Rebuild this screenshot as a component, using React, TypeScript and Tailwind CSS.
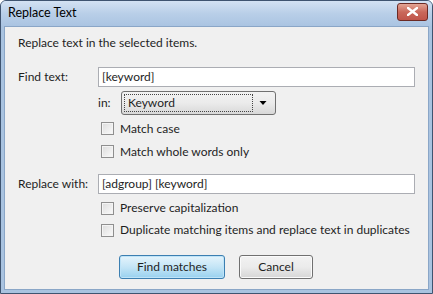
import React from "react";

function CheckRow({ label, h }: { label: string; h: string }) {
  return (
    <div className={`flex items-center whitespace-nowrap ${h}`}>
      <span className="w-[13px] h-[13px] shrink-0 border border-[#8f8f8f] bg-gradient-to-br from-[#dcdcdc] to-[#fbfbfb] shadow-[inset_0_0_0_1px_#f4f4f4]" />
      <span className="ml-[6px]">{label}</span>
    </div>
  );
}

export default function App() {
  return (
    <div
      className="w-[433px] h-[294px] bg-[#a9c3e0] border border-[#3f5470] rounded-t-[6px] flex flex-col text-[12px] text-[#1e1e1e] overflow-hidden"
      style={{ fontFamily: 'Lato, "Noto Sans", sans-serif' }}
    >
      {/* title bar */}
      <div className="h-[25px] shrink-0 flex items-center justify-between pl-[7px] pr-[4px] bg-gradient-to-b from-[#d3e2f3] via-[#b9cfe8] to-[#aac4e2]">
        <span className="text-[12.5px] text-black">Replace Text</span>
        <div className="w-[31px] h-[18px] mb-[4px] rounded-[3px] border border-[#6b2a24] bg-gradient-to-b from-[#e3a595] via-[#c9685b] to-[#c0554a] flex items-center justify-center">
          <svg width="11" height="9" viewBox="0 0 11 9">
            <path d="M1 1 L10 8 M10 1 L1 8" stroke="#fff" strokeWidth="2.4" strokeLinecap="square" />
          </svg>
        </div>
      </div>

      {/* body */}
      <div className="flex-1 mx-[3px] mb-[3px] border border-[#8aa6c7] bg-[#f0f0f0] pl-[13px] pr-[13px] pt-[7px]">
        <div className="h-[18px] flex items-center">Replace text in the selected items.</div>

        <div className="mt-[15px] flex items-center">
          <span className="w-[80px]">Find text:</span>
          <div className="flex-1 h-[20px] border border-[#abadb3] bg-white px-[3px] flex items-center">[keyword]</div>
        </div>

        <div className="mt-[4px] flex items-center pl-[80px]">
          <span className="w-[23px]">in:</span>
          <div className="w-[155px] h-[24px] rounded-[3px] border border-[#707070] bg-gradient-to-b from-[#f2f2f2] via-[#ebebeb] to-[#d8d8d8] flex items-center p-[2px]">
            <div className="flex-1 h-full border border-dotted border-[#444] flex items-center pl-[3px]">Keyword</div>
            <svg width="20" height="8" viewBox="0 0 20 8">
              <path d="M6.5 2 L13.5 2 L10 6 Z" fill="#000" />
            </svg>
          </div>
        </div>

        <div className="mt-[2px] pl-[83px]">
          <CheckRow label="Match case" h="h-[23px]" />
          <CheckRow label="Match whole words only" h="h-[23px]" />
        </div>

        <div className="mt-[11px] flex items-center">
          <span className="w-[80px]">Replace with:</span>
          <div className="flex-1 h-[20px] border border-[#abadb3] bg-white px-[3px] flex items-center">[adgroup] [keyword]</div>
        </div>

        <div className="mt-[3px] pl-[83px]">
          <CheckRow label="Preserve capitalization" h="h-[22px]" />
          <CheckRow label="Duplicate matching items and replace text in duplicates" h="h-[22px]" />
        </div>

        <div className="mt-[14px] flex pl-[101px] gap-[14px]">
          <div className="w-[106px] h-[24px] rounded-[3px] border border-[#3c7fb1] bg-gradient-to-b from-[#e5f4fc] via-[#c4e5f6] to-[#98d1ef] shadow-[inset_0_0_0_1px_#bfe4f8] flex items-center justify-center">
            Find matches
          </div>
          <div className="w-[74px] h-[24px] rounded-[3px] border border-[#707070] bg-gradient-to-b from-[#f2f2f2] via-[#ebebeb] to-[#d6d6d6] shadow-[inset_0_0_0_1px_#fbfbfb] flex items-center justify-center">
            Cancel
          </div>
        </div>
      </div>
    </div>
  );
}
